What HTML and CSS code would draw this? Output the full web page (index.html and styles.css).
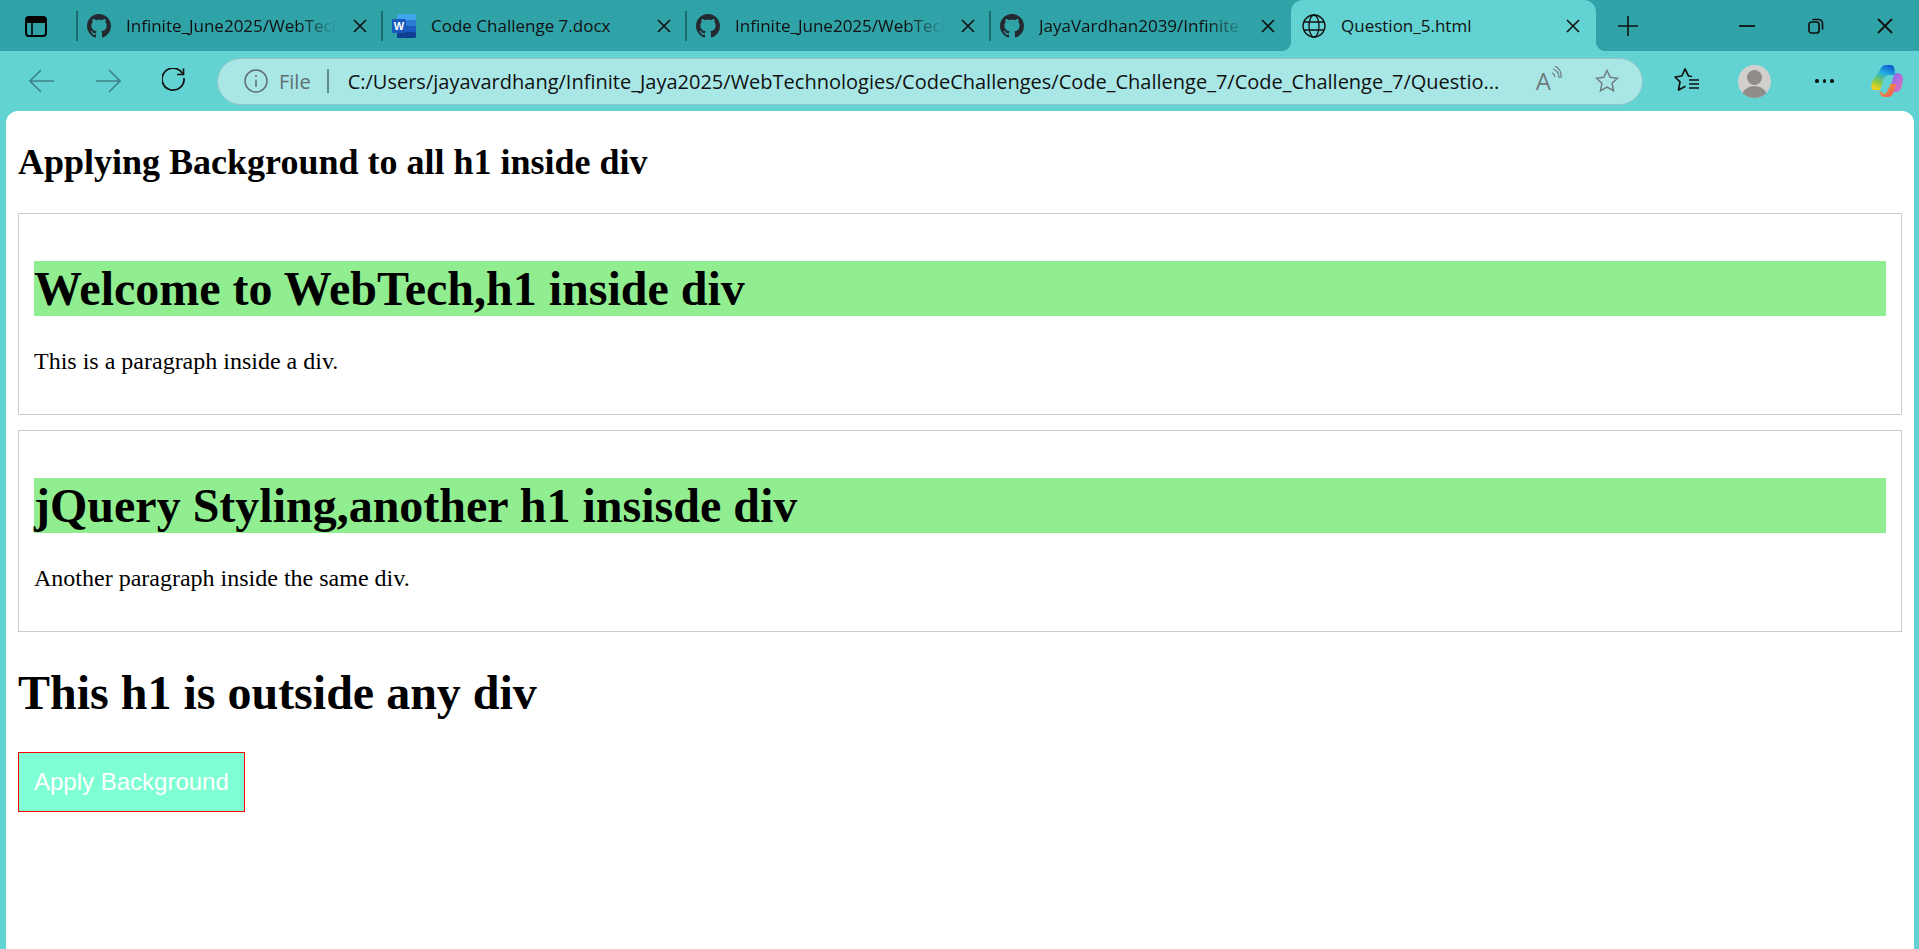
FILE: index.html
```html
<!DOCTYPE html>
<html lang="en">
<head>
    <meta charset="UTF-8">
    <meta name="viewport" content="width=device-width, initial-scale=1.0">
    <title>Question_5.html</title>
    <link rel="stylesheet" href="styles.css">
</head>
<body>
    <svg class="defs" width="0" height="0">
        <symbol id="github" viewBox="0 0 16 16">
            <path fill="#24292f" d="M8 0C3.58 0 0 3.58 0 8c0 3.54 2.29 6.53 5.47 7.59.4.07.55-.17.55-.38 0-.19-.01-.82-.01-1.49-2.01.37-2.53-.49-2.69-.94-.09-.23-.48-.94-.82-1.13-.28-.15-.68-.52-.01-.53.63-.01 1.08.58 1.23.82.72 1.21 1.87.87 2.33.66.07-.52.28-.87.51-1.07-1.78-.2-3.64-.89-3.64-3.95 0-.87.31-1.59.82-2.15-.08-.2-.36-1.02.08-2.12 0 0 .67-.21 2.2.82.64-.18 1.32-.27 2-.27.68 0 1.36.09 2 .27 1.53-1.04 2.2-.82 2.2-.82.44 1.1.16 1.92.08 2.12.51.56.82 1.27.82 2.15 0 3.07-1.87 3.75-3.65 3.95.29.25.54.73.54 1.48 0 1.07-.01 1.93-.01 2.2 0 .21.15.46.55.38A8.013 8.013 0 0016 8c0-4.42-3.58-8-8-8z"/>
        </symbol>
        <symbol id="close" viewBox="0 0 14 14">
            <path d="M1 1l12 12M13 1L1 13" fill="none" stroke="#111" stroke-width="1.6"/>
        </symbol>
    </svg>

    <div class="tabstrip">
        <div class="panel-btn">
            <svg width="26" height="26" viewBox="0 0 26 26"><rect x="3" y="4" width="20" height="19" rx="3" fill="none" stroke="#000" stroke-width="2"/><path d="M3 7a3 3 0 013-3h14a3 3 0 013 3v3H3z" fill="#000"/><path d="M9 10v13" stroke="#000" stroke-width="1.6"/></svg>
        </div>
        <div class="tab tab-first">
            <span class="tab-sep"></span>
            <svg class="tab-icon" viewBox="0 0 16 16"><use href="#github"/></svg>
            <span class="tab-title">Infinite_June2025/WebTech</span>
            <svg class="tab-close"><use href="#close"/></svg>
        </div>
        <div class="tab">
            <span class="tab-sep"></span>
            <svg class="tab-icon" viewBox="0 0 24 24">
                <rect x="5" y="0" width="19" height="24" rx="1.500" fill="#41a5ee"/>
                <rect x="5" y="6" width="19" height="6" fill="#2b7cd3"/>
                <rect x="5" y="12" width="19" height="6" fill="#185abd"/>
                <rect x="5" y="18" width="19" height="6" rx="1" fill="#103f91"/>
                <rect x="0" y="5" width="14" height="14" rx="1" fill="#185abd"/>
                <text x="7" y="16" class="word-w">W</text>
            </svg>
            <span class="tab-title plain">Code Challenge 7.docx</span>
            <svg class="tab-close"><use href="#close"/></svg>
        </div>
        <div class="tab">
            <span class="tab-sep"></span>
            <svg class="tab-icon" viewBox="0 0 16 16"><use href="#github"/></svg>
            <span class="tab-title">Infinite_June2025/WebTech</span>
            <svg class="tab-close"><use href="#close"/></svg>
        </div>
        <div class="tab tab-last">
            <span class="tab-sep"></span>
            <svg class="tab-icon" viewBox="0 0 16 16"><use href="#github"/></svg>
            <span class="tab-title">JayaVardhan2039/Infinite_J</span>
            <svg class="tab-close"><use href="#close"/></svg>
        </div>
        <div class="tab tab-active">
            <svg class="tab-icon" viewBox="0 0 24 24" fill="none" stroke="#111" stroke-width="1.3">
                <circle cx="12" cy="12" r="11"/>
                <ellipse cx="12" cy="12" rx="5" ry="11"/>
                <path d="M2 8h20M2 16h20"/>
            </svg>
            <span class="tab-title plain">Question_5.html</span>
            <svg class="tab-close"><use href="#close"/></svg>
        </div>
        <div class="new-tab">
            <svg width="20" height="20" viewBox="0 0 20 20"><path d="M10 0v20M0 10h20" stroke="#111" stroke-width="1.6"/></svg>
        </div>
        <div class="window-btns">
            <svg width="16" height="16" viewBox="0 0 16 16"><path d="M0 8h16" stroke="#111" stroke-width="1.8"/></svg>
            <svg width="16" height="16" viewBox="0 0 16 16" fill="none" stroke="#111" stroke-width="1.7"><rect x="1" y="4" width="10" height="11" rx="2.5"/><path d="M4.5 1.5h6a4 4 0 014 4v6"/></svg>
            <svg width="16" height="16" viewBox="0 0 16 16"><path d="M1 1l14 14M15 1L1 15" stroke="#111" stroke-width="1.8"/></svg>
        </div>
    </div>

    <div class="toolbar">
        <svg class="nav-btn first" viewBox="0 0 26 26" fill="none" stroke="#3f8388" stroke-width="1.6"><path d="M25 13H1M12 2L1 13l11 11"/></svg>
        <svg class="nav-btn" viewBox="0 0 26 26" fill="none" stroke="#3f8388" stroke-width="1.6"><path d="M1 13h24M14 2l11 11-11 11"/></svg>
        <svg class="nav-btn reload" viewBox="0 0 26 26" fill="none" stroke="#111" stroke-width="1.7"><path d="M20.5 5.5a11 11 0 101.5 4.5"/><path d="M21.5 0.5v6h-6.5"/></svg>

        <div class="address-bar">
            <svg class="info-icon" viewBox="0 0 24 24" fill="none" stroke="#5c6f71" stroke-width="1.5"><circle cx="12" cy="12" r="11"/><path d="M12 10.5v7.5"/><path d="M12 6v2"/></svg>
            <span class="file-label">File</span>
            <span class="bar-divider"></span>
            <span class="url">C:/Users/jayavardhang/Infinite_Jaya2025/WebTechnologies/CodeChallenges/Code_Challenge_7/Code_Challenge_7/Questio...</span>
            <div class="read-aloud">
                <span class="read-a">A</span>
                <svg width="11" height="16" viewBox="0 0 11 16" fill="none" stroke="#6f7d7f" stroke-width="1.3"><path d="M1 7a5 5 0 013 4M2 3a9 9 0 016 9M4 0a12 12 0 016 12"/></svg>
            </div>
            <svg class="bar-star" viewBox="0 0 24 24" fill="none" stroke="#6f7d7f" stroke-width="1.5"><path d="M12 1.5l3.2 6.8 7.3.9-5.4 5.1 1.4 7.4-6.5-3.7-6.5 3.7 1.4-7.4-5.4-5.1 7.3-.9z"/></svg>
        </div>

        <svg class="fav-icon" viewBox="0 0 26 26" fill="none" stroke="#111" stroke-width="1.7" stroke-linejoin="round"><path d="M18 8.500l-3.500-.5L11 1 7.800 8 1 9l5 4.800L4.500 22l7-3.800"/><path d="M15 12h10M15 16h10M15 20h10"/></svg>
        <div class="avatar"><span class="avatar-head"></span><span class="avatar-body"></span></div>
        <div class="more-btn"><span></span><span></span><span></span></div>
        <svg class="copilot" viewBox="0 0 32 32">
            <defs>
                <linearGradient id="cp-left" x1="0.7" y1="0" x2="0.3" y2="1">
                    <stop offset="0" stop-color="#0f5fd0"/>
                    <stop offset="0.35" stop-color="#23b0e0"/>
                    <stop offset="0.7" stop-color="#7ec850"/>
                    <stop offset="1" stop-color="#f2cf1d"/>
                </linearGradient>
                <linearGradient id="cp-right" x1="0" y1="0" x2="1" y2="1">
                    <stop offset="0" stop-color="#6a6ae6"/>
                    <stop offset="0.5" stop-color="#b66de0"/>
                    <stop offset="1" stop-color="#e86fa8"/>
                </linearGradient>
                <linearGradient id="cp-bottom" x1="0" y1="0" x2="1" y2="1">
                    <stop offset="0" stop-color="#f0a13a"/>
                    <stop offset="1" stop-color="#ec5a5a"/>
                </linearGradient>
            </defs>
            <path d="M26 8c3 0 6 2 6 6 0 1-.2 2-.5 3l-1 5c-.6 3-3 5-6 5h-7l4-12c.8-3 2-7 4.500-7z" fill="url(#cp-right)"/>
            <path d="M20 0h-5c-3 0-5 2-6 5L1.500 16C0 20-.5 25 3 25h6l3-9c1-3 3-6 6-6h6l-.5-6C23 2 22 0 20 0z" fill="url(#cp-left)"/>
            <path d="M8 25l1.500 4.500c.5 1.500 2 2.500 4 2.500h3c3 0 5-1.500 6-4.500l3-8.500h-6l-3 7c-1 2-2 3-4 3z" fill="url(#cp-bottom)"/>
        </svg>
    </div>

    <main class="page">
        <h2>Applying Background to all h1 inside div</h2>
        <div class="box">
            <h1 class="highlight">Welcome to WebTech,h1 inside div</h1>
            <p>This is a paragraph inside a div.</p>
        </div>
        <div class="box">
            <h1 class="highlight">jQuery Styling,another h1 insisde div</h1>
            <p>Another paragraph inside the same div.</p>
        </div>
        <h1 class="outside">This h1 is outside any div</h1>
        <button class="apply-btn">Apply Background</button>
    </main>
</body>
</html>
```

FILE: styles.css
```css
html, body {
    height: 100%;
}

body {
    margin: 0;
    display: flex;
    flex-direction: column;
    overflow: hidden;
    background-color: #62d2d2;
    font-family: 'Liberation Serif', serif;
}

.defs {
    display: none;
}

/* tab strip */
.tabstrip {
    height: 51px;
    flex-shrink: 0;
    display: flex;
    align-items: center;
    background-color: #30a3a8;
    font-family: 'Open Sans', sans-serif;
    font-size: 17px;
    color: #111;
}

.panel-btn {
    width: 76px;
    padding-left: 23px;
    box-sizing: border-box;
    display: flex;
}

.tab {
    width: 304px;
    height: 51px;
    box-sizing: border-box;
    display: flex;
    align-items: center;
    flex-shrink: 0;
}

.tab-first {
    width: 305px;
}

.tab-last {
    width: 302px;
}

.tab-sep {
    width: 2px;
    height: 30px;
    margin-right: 9px;
    flex-shrink: 0;
    background-color: #1d6a70;
}

.tab-icon {
    width: 24px;
    height: 24px;
    margin-right: 15px;
    flex-shrink: 0;
}

.tab-title {
    flex: 1;
    min-width: 0;
    white-space: nowrap;
    -webkit-mask-image: linear-gradient(to right, #000 82%, transparent 100%);
    mask-image: linear-gradient(to right, #000 82%, transparent 100%);
}

.tab-title.plain {
    -webkit-mask-image: none;
    mask-image: none;
}

.word-w {
    font-family: 'Liberation Sans', sans-serif;
    font-size: 11px;
    font-weight: bold;
    fill: #fff;
    text-anchor: middle;
}

.tab-close {
    width: 14px;
    height: 14px;
    margin-left: 16px;
    margin-right: 14px;
    flex-shrink: 0;
}

.tab-last .tab-close {
    margin-right: 16px;
}

.tab-active {
    position: relative;
    width: 305px;
    padding-left: 11px;
    background-color: #62d2d2;
    border-radius: 12px 12px 0 0;
}

.tab-active .tab-close {
    margin-right: 16px;
}

.tab-active::before,
.tab-active::after {
    content: "";
    position: absolute;
    bottom: 0;
    width: 10px;
    height: 10px;
}

.tab-active::before {
    left: -10px;
    background: radial-gradient(circle at 0 0, transparent 10px, #62d2d2 10.5px);
}

.tab-active::after {
    right: -10px;
    background: radial-gradient(circle at 100% 0, transparent 10px, #62d2d2 10.5px);
}

.new-tab {
    margin-left: 22px;
    display: flex;
}

.window-btns {
    margin-left: auto;
    width: 180px;
    padding-right: 26px;
    box-sizing: border-box;
    display: flex;
    justify-content: space-between;
    align-items: center;
    flex-shrink: 0;
}

/* toolbar */
.toolbar {
    height: 60px;
    flex-shrink: 0;
    display: flex;
    align-items: center;
    background-color: #62d2d2;
}

.nav-btn {
    width: 26px;
    height: 26px;
    margin-right: 40px;
    flex-shrink: 0;
}

.nav-btn.first {
    margin-left: 29px;
}

.nav-btn.reload {
    margin-left: 1px;
}

.address-bar {
    width: 1426px;
    height: 47px;
    margin-left: -11px;
    padding: 0 23px 0 26px;
    box-sizing: border-box;
    display: flex;
    align-items: center;
    background-color: #a9e7e7;
    border: 1.5px solid #93c6c8;
    border-radius: 24px;
    font-family: 'Open Sans', sans-serif;
    font-size: 20px;
    color: #111;
    flex-shrink: 0;
}

.info-icon {
    width: 24px;
    height: 24px;
    flex-shrink: 0;
}

.file-label {
    margin-left: 11px;
    color: #5c6f71;
}

.bar-divider {
    width: 2px;
    height: 24px;
    margin: 0 19px 0 16px;
    background-color: #5c8b8e;
}

.url {
    flex: 1;
    overflow: hidden;
    white-space: nowrap;
}

.read-aloud {
    display: flex;
    align-items: flex-start;
    margin-right: 33px;
    color: #6f7d7f;
}

.read-a {
    font-size: 24px;
    line-height: 30px;
}

.bar-star {
    width: 24px;
    height: 24px;
    flex-shrink: 0;
}

.fav-icon {
    width: 26px;
    height: 26px;
    margin-left: 31px;
    flex-shrink: 0;
}

.avatar {
    position: relative;
    width: 33px;
    height: 33px;
    margin-left: 38px;
    border-radius: 50%;
    overflow: hidden;
    background-color: #d2d0cd;
    flex-shrink: 0;
}

.avatar-head {
    position: absolute;
    left: 9px;
    top: 5px;
    width: 15px;
    height: 15px;
    border-radius: 50%;
    background-color: #8f8c89;
}

.avatar-body {
    position: absolute;
    left: 4px;
    top: 21px;
    width: 25px;
    height: 20px;
    border-radius: 50%;
    background-color: #8f8c89;
}

.more-btn {
    display: flex;
    gap: 4px;
    margin-left: 44px;
}

.more-btn span {
    width: 3.5px;
    height: 3.5px;
    border-radius: 50%;
    background-color: #111;
}

.copilot {
    width: 32px;
    height: 32px;
    margin-left: 37px;
    flex-shrink: 0;
}

/* page */
.page {
    flex: 1;
    margin: 0 5px 0 6px;
    padding: 0 12px;
    overflow: hidden;
    background-color: #fff;
    border-radius: 12px 12px 0 0;
    color: #000;
    font-size: 24px;
}

.page h2 {
    font-size: 36px;
    margin: 30px 0;
}

.page h1 {
    font-size: 48px;
    margin: 32px 0;
}

.page h1.outside {
    margin-top: 33px;
}

.page p {
    margin: 24px 0;
}

.box {
    border: 1px solid #ccc;
    padding: 15px;
    margin-bottom: 15px;
}

.highlight {
    background-color: #90ee90;
}

.apply-btn {
    padding: 15px;
    border: 1px solid red;
    background-color: #7fffd4;
    color: #fff;
    font-family: 'Liberation Sans', sans-serif;
    font-size: 24px;
}
```
